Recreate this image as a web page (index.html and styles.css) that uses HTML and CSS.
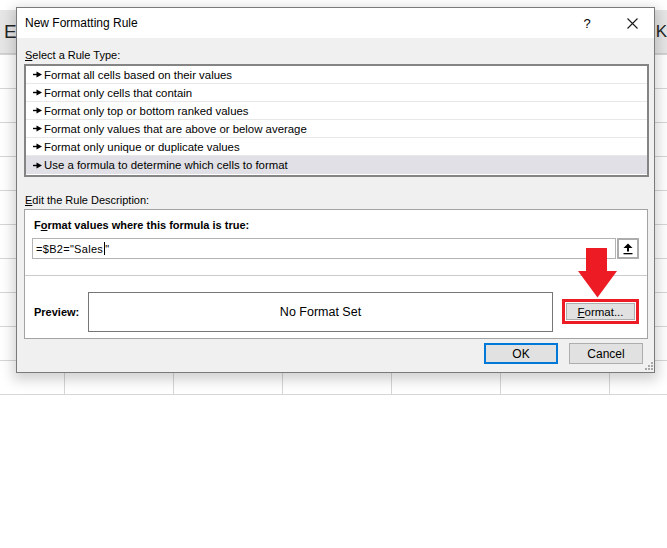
FILE: index.html
```html
<!DOCTYPE html>
<html>
<head>
<meta charset="utf-8">
<title>New Formatting Rule</title>
<link rel="stylesheet" href="styles.css">
</head>
<body>
<div class="screen">
  <div class="sheet">
    <div class="topgap"></div>
    <div class="colhead"><span class="col-e">E</span><span class="col-k">K</span></div>
    <div class="grid"></div>
  </div>

  <div class="dialog">
    <div class="titlebar">
      <span class="title">New Formatting Rule</span>
      <span class="help">?</span>
      <span class="close"><svg width="11" height="11" viewBox="0 0 11 11"><path d="M0.5 0.5 L10.5 10.5 M10.5 0.5 L0.5 10.5" stroke="#1a1a1a" stroke-width="1.1" fill="none"/></svg></span>
    </div>
    <div class="body">
      <div class="label label1"><u>S</u>elect a Rule Type:</div>
      <ul class="rules">
        <li><svg class="bullet" width="9" height="7" viewBox="0 0 9 7"><rect x="0" y="2.8" width="4" height="1.4" fill="#000"/><polygon points="3.5,0.5 9,3.5 3.5,6.5" fill="#000"/></svg>Format all cells based on their values</li>
        <li><svg class="bullet" width="9" height="7" viewBox="0 0 9 7"><rect x="0" y="2.8" width="4" height="1.4" fill="#000"/><polygon points="3.5,0.5 9,3.5 3.5,6.5" fill="#000"/></svg>Format only cells that contain</li>
        <li><svg class="bullet" width="9" height="7" viewBox="0 0 9 7"><rect x="0" y="2.8" width="4" height="1.4" fill="#000"/><polygon points="3.5,0.5 9,3.5 3.5,6.5" fill="#000"/></svg>Format only top or bottom ranked values</li>
        <li><svg class="bullet" width="9" height="7" viewBox="0 0 9 7"><rect x="0" y="2.8" width="4" height="1.4" fill="#000"/><polygon points="3.5,0.5 9,3.5 3.5,6.5" fill="#000"/></svg>Format only values that are above or below average</li>
        <li><svg class="bullet" width="9" height="7" viewBox="0 0 9 7"><rect x="0" y="2.8" width="4" height="1.4" fill="#000"/><polygon points="3.5,0.5 9,3.5 3.5,6.5" fill="#000"/></svg>Format only unique or duplicate values</li>
        <li class="selected"><svg class="bullet" width="9" height="7" viewBox="0 0 9 7"><rect x="0" y="2.8" width="4" height="1.4" fill="#000"/><polygon points="3.5,0.5 9,3.5 3.5,6.5" fill="#000"/></svg>Use a formula to determine which cells to format</li>
      </ul>
      <div class="label label2"><u>E</u>dit the Rule Description:</div>
      <div class="desc">
        <div class="desc-head">F<u>o</u>rmat values where this formula is true:</div>
        <div class="formula-row">
          <div class="formula">=$B2="Sales<span class="caret"></span>"</div>
          <div class="collapse"><svg width="10" height="12" viewBox="0 0 10 12"><polygon points="5,0.5 9.5,5 0.5,5" fill="#000"/><rect x="4" y="4.5" width="2" height="4" fill="#000"/><rect x="0.5" y="10" width="9" height="1.3" fill="#000"/></svg></div>
        </div>
        <div class="sep"></div>
        <div class="preview-row">
          <span class="preview-label">Preview:</span>
          <div class="preview">No Format Set</div>
          <div class="highlight"><button class="btn fmt"><u>F</u>ormat...</button></div>
        </div>
      </div>
      <div class="actions">
        <button class="btn ok">OK</button>
        <button class="btn cancel">Cancel</button>
      </div>
    </div>
    <svg class="arrow" width="39" height="50" viewBox="0 0 39 50"><polygon points="8,0 29,0 29,23 39,23 19.5,49.5 0,23 8,23" fill="#ed1c24"/></svg>
    <svg class="grip" width="8" height="8" viewBox="0 0 8 8"><g fill="#a8a8a8"><rect x="6" y="0" width="2" height="2"/><rect x="3" y="3" width="2" height="2"/><rect x="6" y="3" width="2" height="2"/><rect x="0" y="6" width="2" height="2"/><rect x="3" y="6" width="2" height="2"/><rect x="6" y="6" width="2" height="2"/></g></svg>
  </div>
</div>
</body>
</html>
```

FILE: styles.css
```css
* { box-sizing: border-box; }
html, body { margin: 0; padding: 0; background: #ffffff; }
body { font-family: "Liberation Sans", Arial, sans-serif; color: #000; }

.screen { position: relative; width: 667px; height: 548px; overflow: hidden; background: #fff; }

.sheet { display: flex; flex-direction: column; }
.topgap { height: 10px; background: #ffffff; }
.colhead {
  height: 44px;
  background: #e6e6e6;
  border-bottom: 1px solid #cfcfcf;
  display: flex;
  align-items: center;
  justify-content: space-between;
  padding: 0 0 0 4px;
  font-size: 19px;
  color: #262626;
}
.col-k { font-size: 17px; margin-right: 0; }
.grid {
  height: 341px;
  background-color: #fff;
  background-image:
    linear-gradient(to bottom, transparent 33px, #d6d6d6 33px),
    linear-gradient(to right, transparent 108px, #d6d6d6 108px);
  background-size: 100% 34px, 109px 100%;
  background-position: 0 1px, -44px 0;
}

.dialog {
  position: absolute;
  left: 16px;
  top: 7px;
  width: 639px;
  height: 366px;
  border: 1px solid #7a7a7a;
  background: #f0f0f0;
  box-shadow: 0 4px 12px 3px rgba(0, 0, 0, 0.18);
  display: flex;
  flex-direction: column;
}

.titlebar {
  height: 30px;
  background: #ffffff;
  display: flex;
  align-items: center;
  padding-left: 8px;
  font-size: 12px;
}
.title { flex: 1; }
.help { width: 30px; margin-right: 15px; text-align: center; font-size: 13px; }
.close { width: 30px; margin-right: 7px; display: flex; justify-content: center; }

.body { flex: 1; padding: 0 5px 0 7px; display: flex; flex-direction: column; font-size: 11px; }

.label { line-height: 16px; padding-left: 1px; }
.label1 { height: 26px; padding-top: 9px; }
.label2 { height: 32px; padding-top: 15px; }
u { text-underline-offset: 1px; }

.rules {
  list-style: none;
  margin: 0;
  padding: 0 0 1px 0;
  border: 2px solid #848484;
  background: #fff;
}
.rules li {
  height: 18px;
  border-bottom: 1px solid #e8e8e8;
  display: flex;
  align-items: center;
  padding-left: 7px;
  font-size: 11.4px;
  white-space: nowrap;
}
.rules li.selected { border-bottom: none; background: #e0e0e6; }
.bullet { margin-right: 2px; flex: none; }

.desc {
  height: 130px;
  margin-right: 1px;
  border: 1px solid #a3a3a3;
  background: #fff;
  display: flex;
  flex-direction: column;
}
.desc-head { font-weight: bold; line-height: 16px; padding: 7px 0 0 9px; font-size: 11px; }
.formula-row { display: flex; margin-top: 5px; padding: 0 8px 0 7px; height: 21px; gap: 1px; }
.formula {
  flex: 1;
  border: 1px solid #b3b3b3;
  display: flex;
  align-items: center;
  padding-left: 3px;
  font-size: 11px;
  letter-spacing: 0.3px;
}
.caret { display: inline-block; width: 1px; height: 13px; background: #000; margin: 0 0 0 1px; }
.collapse {
  width: 22px;
  border: 2px solid #acacac;
  background: #fff;
  display: flex;
  align-items: center;
  justify-content: center;
}
.sep { height: 1px; background: #cbcbcb; margin-top: 16px; }

.preview-row { display: flex; align-items: flex-start; padding: 16px 8px 0 9px; }
.preview-label { width: 54px; height: 40px; display: flex; align-items: center; font-weight: bold; font-size: 11px; }
.preview {
  width: 465px;
  height: 40px;
  border: 1px solid #767676;
  background: #fff;
  display: flex;
  align-items: center;
  justify-content: center;
  font-size: 12.5px;
}
.highlight {
  margin-left: 9px;
  margin-top: 7px;
  width: 77px;
  height: 25px;
  border: 3px solid #ed1c24;
  padding: 1px;
  background: #fff;
  display: flex;
}
.btn {
  font-family: "Liberation Sans", Arial, sans-serif;
  background: #e1e1e1;
  border: 1px solid #adadad;
  color: #000;
  padding: 0;
  margin: 0;
}
.fmt { flex: 1; font-size: 11.5px; }

.actions { display: flex; justify-content: flex-end; gap: 11px; padding-right: 6px; margin-top: 4px; }
.actions .btn { width: 74px; height: 21px; font-size: 12px; }
.actions .ok { border: 2px solid #0078d7; }

.arrow { position: absolute; left: 561px; top: 240px; }
.grip { position: absolute; right: 1px; bottom: 2px; }
```
